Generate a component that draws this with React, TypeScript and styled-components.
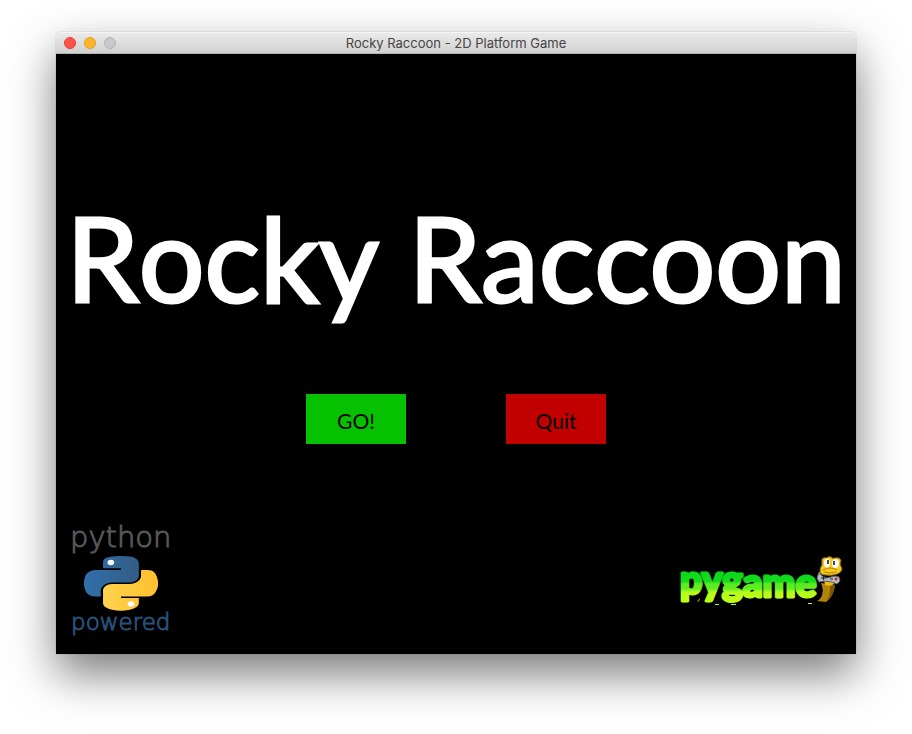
import React from "react";
import styled, { createGlobalStyle } from "styled-components";

const GlobalStyle = createGlobalStyle`
  * { box-sizing: border-box; }
  body { margin: 0; background: #fff; }
`;

const Desktop = styled.div`
  display: flex;
  min-height: 100vh;
  padding: 32px 56px 80px;
`;

const GameWindow = styled.main`
  display: flex;
  flex: 1;
  min-width: 0;
  flex-direction: column;
  border-radius: 5px 5px 0 0;
  box-shadow: 0 0 1px rgba(0, 0, 0, 0.5), 0 20px 46px rgba(0, 0, 0, 0.52);
`;

const TitleBar = styled.header`
  display: grid;
  grid-template-columns: 1fr auto 1fr;
  align-items: center;
  height: 22px;
  padding: 0 8px;
  border-radius: 5px 5px 0 0;
  border-bottom: 1px solid #b4b4b4;
  background: linear-gradient(#ebebeb, #d1d1d1);
  box-shadow: inset 0 1px #f5f5f5;
`;

const Lights = styled.div`
  display: flex;
  gap: 8px;
`;

const Light = styled.button<{ $fill: string; $edge: string }>`
  width: 12px;
  height: 12px;
  padding: 0;
  border: 1px solid ${(p) => p.$edge};
  border-radius: 50%;
  background: ${(p) => p.$fill};
`;

const Caption = styled.span`
  color: #454545;
  font: 13px/20px Inter, "Liberation Sans", sans-serif;
`;

const Stage = styled.section`
  display: flex;
  flex: 1;
  flex-direction: column;
  align-items: center;
  padding-top: 124px;
  background: #000;
`;

const GameTitle = styled.h1`
  margin: 0;
  color: #fff;
  font: 400 116px/160px Lato, sans-serif;
  font-kerning: none;
  text-align: center;
  -webkit-text-stroke: 3px #fff;
  stroke-linejoin: round;
`;

const Actions = styled.div`
  display: flex;
  gap: 100px;
  margin-top: 56px;
`;

const ActionButton = styled.button<{ $color: string }>`
  width: 100px;
  height: 50px;
  padding: 4px 0 0;
  border: 0;
  background: ${(p) => p.$color};
  color: #000;
  font: 400 21px/24px Lato, sans-serif;
`;

const Credits = styled.footer`
  display: flex;
  align-items: flex-end;
  justify-content: space-between;
  width: 100%;
  margin-top: auto;
  padding: 0 12px 18px 14px;
`;

const PythonBadge = styled.div`
  display: flex;
  flex-direction: column;
  align-items: center;
`;

const BadgeWord = styled.span<{ $size: number; $color: string }>`
  color: ${(p) => p.$color};
  font: 200 ${(p) => p.$size}px/28px "DejaVu Sans", sans-serif;
  -webkit-text-stroke: 1px ${(p) => p.$color};
`;

const PythonMark = styled.svg`
  display: block;
  width: 74px;
  height: 55px;
  margin: 5px 0 -3px;
`;

const PygameMark = styled.svg`
  display: block;
  width: 166px;
  height: 51px;
  margin-bottom: 30px;
  overflow: visible;
`;

function PythonLogo() {
  return (
    <PythonMark viewBox="13 2 102 104" preserveAspectRatio="none" aria-hidden="true">
      <defs>
        <linearGradient id="pyBlue"><stop stopColor="#2f70a9" /><stop offset="1" stopColor="#325d86" /></linearGradient>
        <linearGradient id="pyGold"><stop stopColor="#ffd34c" /><stop offset="1" stopColor="#ffc02f" /></linearGradient>
      </defs>
      <path fill="url(#pyBlue)" d="M63.391 1.988c-4.222.02-8.252.379-11.8 1.007-10.45 1.846-12.346 5.71-12.346 12.837v9.411h24.693v3.137H29.977c-7.176 0-13.46 4.313-15.426 12.521-2.268 9.405-2.368 15.275 0 25.096 1.755 7.311 5.947 12.519 13.124 12.519h8.491V67.234c0-8.151 7.051-15.34 15.426-15.34h24.665c6.866 0 12.346-5.654 12.346-12.548V15.833c0-6.693-5.646-11.72-12.346-12.837-4.244-.706-8.645-1.027-12.866-1.008z" />
      <path fill="url(#pyGold)" d="M91.682 28.38v10.966c0 8.5-7.208 15.655-15.426 15.655H51.591c-6.756 0-12.346 5.783-12.346 12.549v23.515c0 6.691 5.818 10.628 12.346 12.547 7.816 2.297 15.312 2.713 24.665 0 6.216-1.801 12.346-5.423 12.346-12.547v-9.412H63.938v-3.138h37.012c7.176 0 9.852-5.005 12.348-12.519 2.578-7.735 2.467-15.174 0-25.096-1.774-7.145-5.161-12.521-12.348-12.521z" />
      <ellipse cx="50" cy="14.3" rx="4.6" ry="5" fill="#fff" />
      <ellipse cx="77.8" cy="92.6" rx="4.6" ry="5" fill="#fff" />
    </PythonMark>
  );
}

function PygameLogo() {
  return (
    <PygameMark viewBox="8 10 166 51" role="img" aria-label="pygame">
      <defs>
        <linearGradient id="slime" gradientUnits="userSpaceOnUse" x1="0" y1="26" x2="0" y2="58">
          <stop stopColor="#0bd51b" />
          <stop offset=".33" stopColor="#15dc1c" />
          <stop offset=".4" stopColor="#5aea22" />
          <stop offset=".56" stopColor="#62ef20" />
          <stop offset=".66" stopColor="#b5fb1c" />
          <stop offset="1" stopColor="#bfff14" />
        </linearGradient>
      </defs>
      <path d="M151 38 Q154 45 152 50 Q151 54 147 56 L156 57 Q164 51 165 40Z" fill="#b08408" />
      <path d="M160 41 L165 40 Q164 51 156 57Q161 50 160 41Z" fill="#7c5900" />
      <text x="10" y="49" fill="url(#slime)" stroke="url(#slime)" strokeWidth="3" strokeLinejoin="round" fontFamily="Lato, sans-serif" fontWeight="900" fontSize="39">
        pyg<tspan y="52">ame</tspan>
      </text>
      <g fill="#b5fb1c">
        <path d="M45 59h4v1h-4zM61 59h5v1h-5zM138 58h4v1h-4z" />
        <path fill="#8f7c10" d="M27 56l3-3v2l-2 2z" />
      </g>
      <path d="M154 35q3-2 9 0l1 4q-4 3-9 1z" fill="#edb914" />
      <path d="M149 27l3 4 5 2 8-2 4 1 1 4-3 3-5-2-8-1-5 1-2-4z" fill="#b4bcc4" stroke="#5c6268" />
      <path d="M151 33h5M153.500 31v4M160 34h3" stroke="#252a30" />
      <circle cx="166" cy="34" r="1.500" fill="#c52c2c" />
      <path d="M152 14q2-2 5-1 1-2 4-1 1 2 4 1 4-1 6 2l-1 4 2 5q-1 4-5 5-6 2-11 1-6 0-6-4 0-3 2-6z" fill="#f5c81c" stroke="#9a7206" />
      <path d="M153 25q7-4 14 0M154 27q6 2 12 0" fill="none" stroke="#b98308" />
      <ellipse cx="157" cy="18" rx="3" ry="4.500" fill="#fff" />
      <ellipse cx="165.500" cy="18.500" rx="3.500" ry="4.500" fill="#fff" />
      <path d="M158 15v4M164 16v4" stroke="#111" strokeWidth="1.500" />
    </PygameMark>
  );
}

export default function App() {
  return (
    <>
      <GlobalStyle />
      <Desktop>
        <GameWindow>
          <TitleBar>
            <Lights>
              <Light aria-label="Close" $fill="#ff514a" $edge="#e33e37" />
              <Light aria-label="Minimize" $fill="#ffb52a" $edge="#dfa023" />
              <Light aria-label="Zoom" disabled $fill="#c9c9c9" $edge="#b2b2b2" />
            </Lights>
            <Caption>Rocky Raccoon - 2D Platform Game</Caption>
          </TitleBar>
          <Stage>
            <GameTitle>Rocky Raccoon</GameTitle>
            <Actions>
              <ActionButton $color="#05c100">GO!</ActionButton>
              <ActionButton $color="#c10000">Quit</ActionButton>
            </Actions>
            <Credits>
              <PythonBadge>
                <BadgeWord $size={29} $color="#585858">python</BadgeWord>
                <PythonLogo />
                <BadgeWord $size={23} $color="#28507a">powered</BadgeWord>
              </PythonBadge>
              <PygameLogo />
            </Credits>
          </Stage>
        </GameWindow>
      </Desktop>
    </>
  );
}
